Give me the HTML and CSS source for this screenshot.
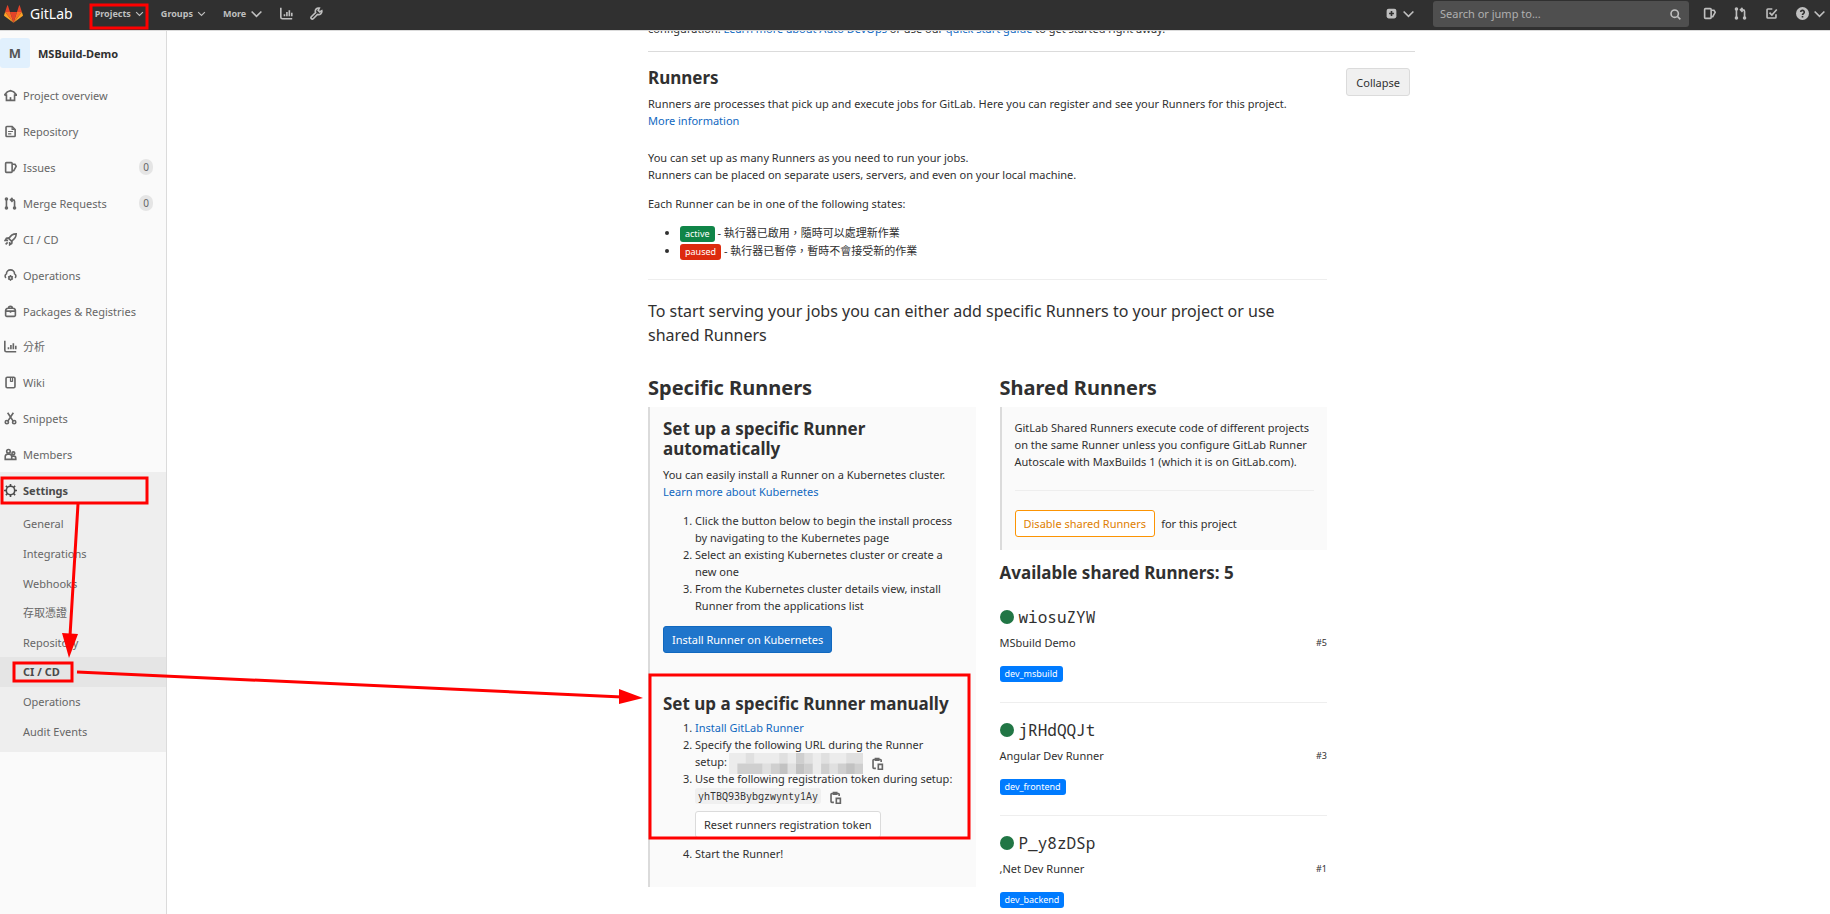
FILE: index.html
```
<!DOCTYPE html>
<html lang="en">

<head>
    <meta charset="UTF-8">
    <meta name="viewport" content="width=device-width, initial-scale=1.0">
    <title>CI / CD Settings · MSBuild-Demo · GitLab</title>
    <link rel="stylesheet" href="styles.css">
</head>

<body>

    <!-- Shared icons -->
    <svg class="icon-defs" aria-hidden="true">
        <symbol id="chevron" viewBox="0 0 16 16"><path d="M2 5.500l6 6 6-6" /></symbol>
        <symbol id="chart" viewBox="0 0 16 16"><path d="M1 1v11.500a2 2 0 0 0 2 2h12M5.500 9v2.500M8.500 6v5.500M11.500 4v7.500M14.500 7v4.500" /></symbol>
        <symbol id="wrench" viewBox="0 0 16 16"><path d="M14.500 4.500l-2.500 1.500-2-2 1.500-2.700a4 4 0 0 0-4.600 5.500L1.600 12a1.700 1.700 0 0 0 2.400 2.400l5.200-5.300a4 4 0 0 0 5.300-4.600z" /></symbol>
        <symbol id="home" viewBox="0 0 16 16"><path d="M.5 7.500L4 3.500 8 2l4 1.500 3.500 4H13M.5 7.500H3M3 6.500V14h10V6.500" /><path d="M8 10v4" /></symbol>
        <symbol id="doc" viewBox="0 0 16 16"><path d="M3.500 1.800H10l3.700 3.700v7.700a1 1 0 0 1-1 1H3.500a1 1 0 0 1-1-1V2.800a1 1 0 0 1 1-1z" /><path class="thin" d="M5 8h6M5 11h4M10 2v3.500h3" /></symbol>
        <symbol id="issues" viewBox="0 0 16 16"><path d="M3 2h6a1 1 0 0 1 1 1v10a1 1 0 0 1-1 1H3a1 1 0 0 1-1-1V3a1 1 0 0 1 1-1zM10 4h3.500L15 6.500 12 12h-2" /></symbol>
        <symbol id="merge" viewBox="0 0 16 16"><path d="M3 2v12M8.500 3.500H11a2 2 0 0 1 2 2V14M10.500 1L8 3.500 10.500 6" /><circle cx="3" cy="2.500" r="1.200" /><circle cx="3" cy="13.500" r="1.200" /><circle cx="13" cy="13.500" r="1.200" /></symbol>
        <symbol id="rocket" viewBox="0 0 16 16"><path d="M15 1c-4 0-7 2-9 6l3 3c4-2 6-5 6-9zM6 6L3 6.500 1.500 9 5 9M10 10l-.5 3-2.500 1.500V11M4.500 11.500L2 14" /></symbol>
        <symbol id="cloud" viewBox="0 0 16 16"><path d="M2.500 11A3 3 0 0 1 3 6a5 5 0 0 1 10 0 3 3 0 0 1 .5 5" /><circle cx="8" cy="11" r="2" /><path class="thin" d="M8 7.500V9M8 13v1.500M5 9.300l1.200.7M11 9.300l-1.200.7M5 12.700l1.200-.7M11 12.700l-1.200-.7" /></symbol>
        <symbol id="package" viewBox="0 0 16 16"><path d="M2 7.500h12v5a1.500 1.500 0 0 1-1.500 1.500h-9A1.500 1.500 0 0 1 2 12.500zM2 7.500C2 5.500 3 4 5 4h6c2 0 3 1.500 3 3.500M5.500 4a2.500 2.500 0 0 1 5 0M8 7v2.500" /></symbol>
        <symbol id="book" viewBox="0 0 16 16"><path d="M4 1.500h8a1.500 1.500 0 0 1 1.500 1.500v10a1.500 1.500 0 0 1-1.500 1.500H4A1.500 1.500 0 0 1 2.500 13V3A1.500 1.500 0 0 1 4 1.500z" /><path class="thin" d="M8 2v5M10.500 2v5M8 6.500h2.500" /></symbol>
        <symbol id="scissors" viewBox="0 0 16 16"><path d="M4.500 1l7 10.500M11.500 1l-7 10.500" /><circle cx="3.500" cy="12.500" r="2" /><circle cx="12.500" cy="12.500" r="2" /></symbol>
        <symbol id="members" viewBox="0 0 16 16"><circle cx="5.500" cy="4" r="2.200" /><circle cx="11.500" cy="6.500" r="1.700" /><path d="M1.500 14v-3.500a3 3 0 0 1 3-3h2a3 3 0 0 1 3 3V14zM9.500 10h2.500a2.500 2.500 0 0 1 2.500 2.500V14h-5" /></symbol>
        <symbol id="gear" viewBox="0 0 16 16"><circle cx="8" cy="8" r="5.200" /><path d="M8 0v3M8 13v3M0 8h3M13 8h3M2.300 2.300l2 2M11.700 11.700l2 2M13.700 2.300l-2 2M4.300 11.700l-2 2" /></symbol>
        <symbol id="search" viewBox="0 0 16 16"><circle cx="7" cy="7" r="4.500" /><path d="M10.500 10.500L14 14" /></symbol>
        <symbol id="todo" viewBox="0 0 16 16"><path d="M9 2.500H3.500a1 1 0 0 0-1 1v9a1 1 0 0 0 1 1h9a1 1 0 0 0 1-1V9M5.500 7l3 3 6-7" /></symbol>
        <symbol id="copy" viewBox="0 0 16 16"><path d="M6 14H3.500a1 1 0 0 1-1-1V4a1 1 0 0 1 1-1H5M10 3h1.500a1 1 0 0 1 1 1v2M5.500 2h4v2h-4zM9 9h5v6H9z" /></symbol>
    </svg>

    <!-- Top bar -->
    <header class="navbar">
        <a href="#" class="brand">
            <svg class="logo" viewBox="0 0 36 34" aria-hidden="true">
                <path fill="#e24329" d="M18 33.500l6.600-20.400H11.400z" />
                <path fill="#fc6d26" d="M18 33.500l-6.600-20.400H2.100zM18 33.500l6.600-20.400h9.300z" />
                <path fill="#fca326" d="M2.100 13.100l-2 6.200a1.400 1.400 0 0 0 .5 1.500L18 33.500zM33.900 13.100l2 6.200a1.400 1.400 0 0 1-.5 1.500L18 33.500z" />
                <path fill="#e24329" d="M2.100 13.100h9.300L7.400.8a.7.7 0 0 0-1.300 0zM33.900 13.100h-9.300l4-12.300a.7.7 0 0 1 1.300 0z" />
            </svg>
            <span>GitLab</span>
        </a>
        <nav class="main-nav">
            <button>Projects <svg class="icon small"><use href="#chevron" /></svg></button>
            <button>Groups <svg class="icon small"><use href="#chevron" /></svg></button>
            <button>More <svg class="icon"><use href="#chevron" /></svg></button>
            <a href="#" aria-label="Analytics"><svg class="icon"><use href="#chart" /></svg></a>
            <a href="#" aria-label="Admin area"><svg class="icon"><use href="#wrench" /></svg></a>
        </nav>
        <div class="nav-right">
            <button class="new-btn" aria-label="New">
                <svg class="icon" viewBox="0 0 16 16"><rect class="solid" x="2" y="2" width="12" height="12" rx="2.500" /><path class="cut" d="M8 5v6M5 8h6" /></svg>
                <svg class="icon"><use href="#chevron" /></svg>
            </button>
            <form class="search">
                <input type="text" aria-label="Search" placeholder="Search or jump to...">
                <svg class="icon"><use href="#search" /></svg>
            </form>
            <a href="#" aria-label="Issues"><svg class="icon"><use href="#issues" /></svg></a>
            <a href="#" aria-label="Merge requests"><svg class="icon"><use href="#merge" /></svg></a>
            <a href="#" aria-label="To-Do"><svg class="icon"><use href="#todo" /></svg></a>
            <button class="help-btn" aria-label="Help">
                <svg class="icon" viewBox="0 0 16 16"><circle class="solid" cx="8" cy="8" r="8" /><path class="cut" d="M5.800 6.300a2.200 2.200 0 1 1 3.300 1.900q-1.100.6-1.100 1.500M8 11v1.800" /></svg>
                <svg class="icon"><use href="#chevron" /></svg>
            </button>
        </div>
    </header>

    <div class="page">
        <!-- Sidebar -->
        <aside class="sidebar">
            <a href="#" class="project">
                <span class="avatar">M</span>
                <span>MSBuild-Demo</span>
            </a>
            <ul class="side-menu">
                <li><a href="#"><svg class="icon"><use href="#home" /></svg>Project overview</a></li>
                <li><a href="#"><svg class="icon"><use href="#doc" /></svg>Repository</a></li>
                <li><a href="#"><svg class="icon"><use href="#issues" /></svg>Issues<span class="count">0</span></a></li>
                <li><a href="#"><svg class="icon"><use href="#merge" /></svg>Merge Requests<span class="count">0</span></a></li>
                <li><a href="#"><svg class="icon"><use href="#rocket" /></svg>CI / CD</a></li>
                <li><a href="#"><svg class="icon"><use href="#cloud" /></svg>Operations</a></li>
                <li><a href="#"><svg class="icon"><use href="#package" /></svg>Packages &amp; Registries</a></li>
                <li><a href="#" class="short"><svg class="icon"><use href="#chart" /></svg>分析</a></li>
                <li><a href="#"><svg class="icon"><use href="#book" /></svg>Wiki</a></li>
                <li><a href="#"><svg class="icon"><use href="#scissors" /></svg>Snippets</a></li>
                <li><a href="#"><svg class="icon"><use href="#members" /></svg>Members</a></li>
                <li class="active">
                    <a href="#"><svg class="icon"><use href="#gear" /></svg>Settings</a>
                    <ul class="sub-menu">
                        <li><a href="#">General</a></li>
                        <li><a href="#">Integrations</a></li>
                        <li><a href="#">Webhooks</a></li>
                        <li><a href="#">存取憑證</a></li>
                        <li><a href="#">Repository</a></li>
                        <li><a href="#" class="current">CI / CD</a></li>
                        <li><a href="#">Operations</a></li>
                        <li><a href="#">Audit Events</a></li>
                    </ul>
                </li>
            </ul>
        </aside>

        <!-- Main content -->
        <main class="content">
            <div class="container">
                <p class="auto-devops">configuration. <a href="#">Learn more about Auto DevOps</a> or use our <a href="#">quick start guide</a> to get started right away.</p>

                <section class="settings">
                    <div class="settings-header">
                        <div>
                            <h4>Runners</h4>
                            <p>Runners are processes that pick up and execute jobs for GitLab. Here you can register and see your Runners for this project.<br><a href="#">More information</a></p>
                        </div>
                        <button class="btn btn-collapse">Collapse</button>
                    </div>

                    <div class="settings-content">
                        <p>You can set up as many Runners as you need to run your jobs.<br>Runners can be placed on separate users, servers, and even on your local machine.</p>
                        <p>Each Runner can be in one of the following states:</p>
                        <ul class="states">
                            <li><span class="badge badge-success">active</span> - 執行器已啟用，隨時可以處理新作業</li>
                            <li><span class="badge badge-danger">paused</span> - 執行器已暫停，暫時不會接受新的作業</li>
                        </ul>
                        <hr>
                        <p class="lead">To start serving your jobs you can either add specific Runners to your project or use shared Runners</p>

                        <div class="columns">
                            <!-- Specific runners -->
                            <div>
                                <h3>Specific Runners</h3>
                                <div class="well">
                                    <h4>Set up a specific Runner automatically</h4>
                                    <p>You can easily install a Runner on a Kubernetes cluster. <a href="#">Learn more about Kubernetes</a></p>
                                    <ol>
                                        <li>Click the button below to begin the install process by navigating to the Kubernetes page</li>
                                        <li>Select an existing Kubernetes cluster or create a new one</li>
                                        <li>From the Kubernetes cluster details view, install Runner from the applications list</li>
                                    </ol>
                                    <button class="btn btn-info">Install Runner on Kubernetes</button>

                                    <h4 class="manual">Set up a specific Runner manually</h4>
                                    <ol>
                                        <li><a href="#">Install GitLab Runner</a></li>
                                        <li>Specify the following URL during the Runner<br>setup:<svg class="masked" viewBox="0 0 16 2" preserveAspectRatio="none" aria-hidden="true">
                                                <path fill="#ececec" d="M0 0h16v2H0z" />
                                                <path fill="#e0e0e0" d="M2 0h1v1H2zM6 0h1v1H6zM9 0h1v1H9zM11 0h1v1h-1zM14 0h2v1h-2zM4 1h1v1H4zM7 1h1v1H7zM12 1h1v1h-1z" />
                                                <path fill="#cfcfcf" d="M1 1h3v1H1zM5 1h1v1H5zM8 0h1v1H8zM9 1h1v1H9zM11 1h1v1h-1zM13 1h3v1h-3z" />
                                                <path fill="#c2c2c2" d="M6 1h1v1H6zM8 1h1v1H8zM14 1h1v1h-1z" />
                                            </svg>
                                            <button class="copy-btn" aria-label="Copy URL"><svg class="icon"><use href="#copy" /></svg></button>
                                        </li>
                                        <li>Use the following registration token during setup:
                                            <code>yhTBQ93Bybgzwynty1Ay</code>
                                            <button class="copy-btn" aria-label="Copy token"><svg class="icon"><use href="#copy" /></svg></button>
                                            <div class="reset"><button class="btn">Reset runners registration token</button></div>
                                        </li>
                                        <li>Start the Runner!</li>
                                    </ol>
                                </div>
                            </div>

                            <!-- Shared runners -->
                            <div>
                                <h3>Shared Runners</h3>
                                <div class="well">
                                    <p>GitLab Shared Runners execute code of different projects on the same Runner unless you configure GitLab Runner Autoscale with MaxBuilds 1 (which it is on GitLab.com).</p>
                                    <hr>
                                    <div class="toggle"><button class="btn btn-warning">Disable shared Runners</button> for this project</div>
                                </div>
                                <h4 class="available">Available shared Runners: 5</h4>
                                <ul class="runners">
                                    <li>
                                        <div class="runner-name"><i class="dot"></i>wiosuZYW</div>
                                        <div class="runner-desc">MSbuild Demo <small>#5</small></div>
                                        <span class="badge badge-primary">dev_msbuild</span>
                                    </li>
                                    <li>
                                        <div class="runner-name"><i class="dot"></i>jRHdQQJt</div>
                                        <div class="runner-desc">Angular Dev Runner <small>#3</small></div>
                                        <span class="badge badge-primary">dev_frontend</span>
                                    </li>
                                    <li>
                                        <div class="runner-name"><i class="dot"></i>P_y8zDSp</div>
                                        <div class="runner-desc">,Net Dev Runner <small>#1</small></div>
                                        <span class="badge badge-primary">dev_backend</span>
                                    </li>
                                </ul>
                            </div>
                        </div>
                    </div>
                </section>
            </div>
        </main>
    </div>

    <!-- Red guide marks over the page -->
    <svg class="marks" width="1830" height="914" aria-hidden="true">
        <rect x="91" y="5" width="56" height="23" />
        <rect x="2" y="478" width="145" height="25" />
        <rect x="14" y="663" width="58" height="18" />
        <rect x="650" y="675" width="319" height="163" />
        <path d="M78 504L70 636M77 672L622 697" />
        <path class="head" d="M62 633l16 1-9 24zM619 689l24 9-24 6z" />
    </svg>

</body>

</html>
```
FILE: styles.css
```
* {
    box-sizing: border-box;
}

body {
    margin: 0;
    font-family: "Noto Sans", "Noto Sans CJK TC", sans-serif;
    font-size: 11px;
    line-height: 17px;
    color: #303030;
    background: #fff;
    height: 100vh;
    overflow: hidden;
}

a {
    color: #1068bf;
    text-decoration: none;
}

p {
    margin: 0 0 12px;
}

ul,
ol {
    margin: 0;
    padding: 0;
}

button,
input {
    font-family: inherit;
    font-size: inherit;
}

hr {
    border: 0;
    border-top: 1px solid #eee;
    margin: 19px 0;
}

h3,
h4 {
    margin: 0;
    font-weight: 700;
}

h3 {
    font-size: 20px;
    line-height: 24px;
}

h4 {
    font-size: 17px;
    line-height: 20px;
}

/* Icons */
.icon-defs {
    display: none;
}

.icon {
    width: 13px;
    height: 13px;
    flex: none;
    fill: none;
    stroke: currentColor;
    stroke-width: 2;
}

.icon.small {
    width: 9px;
    height: 9px;
}

.thin {
    stroke-width: 1.5;
}

.icon .solid {
    fill: currentColor;
    stroke: none;
}

.icon .cut {
    stroke: #303030;
}

/* Top bar */
.navbar {
    position: relative;
    z-index: 5;
    display: flex;
    align-items: center;
    height: 31px;
    padding: 0 4px 3px;
    background: #303030;
    border-bottom: 1px solid #dbdbdb;
    color: #bfbfbf;
}

.navbar a,
.navbar button {
    display: flex;
    align-items: center;
    color: inherit;
    background: none;
    border: 0;
    padding: 0;
}

.navbar .brand {
    gap: 7px;
    color: #fff;
    font-size: 14px;
}

.logo {
    width: 19px;
    height: 18px;
}

.main-nav {
    display: flex;
    align-items: center;
    gap: 17px;
    margin-left: 22px;
}

.main-nav button {
    gap: 4px;
    font-size: 9px;
    font-weight: 700;
}

.nav-right {
    display: flex;
    align-items: center;
    gap: 18px;
    margin-left: auto;
}

.nav-right .new-btn,
.nav-right .help-btn {
    gap: 4px;
}

.search {
    position: relative;
    width: 256px;
    margin-right: -4px;
}

.search input {
    width: 100%;
    height: 26px;
    padding: 0 7px;
    border: 0;
    border-radius: 3px;
    background: #4f4f4f;
    color: #fff;
}

.search input::placeholder {
    color: #b0b0b0;
}

.search .icon {
    position: absolute;
    right: 7px;
    top: 7px;
}

/* Sidebar */
.page {
    display: flex;
    height: calc(100vh - 31px);
}

.sidebar {
    flex: none;
    width: 167px;
    background: #fafafa;
    border-right: 1px solid #dbdbdb;
}

.project {
    display: flex;
    align-items: center;
    gap: 8px;
    height: 44px;
    margin-bottom: 2px;
    font-weight: 700;
    color: #303030;
}

.avatar {
    width: 30px;
    height: 30px;
    border-radius: 3px;
    background: #e1f0fd;
    color: #555;
    font-size: 13px;
    line-height: 30px;
    text-align: center;
}

.side-menu,
.sub-menu,
.runners {
    list-style: none;
}

.side-menu a {
    display: flex;
    align-items: center;
    gap: 6px;
    height: 36px;
    padding: 0 13px 0 4px;
    color: #666;
}

.side-menu a.short {
    height: 35px;
}

.count {
    margin-left: auto;
    padding: 0 4px;
    border-radius: 8px;
    background: #e5e5e5;
    font-size: 10px;
    line-height: 16px;
}

.side-menu .active {
    background: #eee;
    padding-bottom: 6px;
}

.side-menu .active > a,
.side-menu .current {
    font-weight: 700;
    color: #4a4a4a;
}

.sub-menu {
    display: grid;
    grid-auto-rows: 1fr;
    height: 237px;
    margin-top: 1px;
}

.sub-menu a {
    height: 100%;
    padding-left: 23px;
}

.sub-menu .current {
    background: #e5e5e5;
}

/* Main content */
.content {
    flex: 1;
    overflow: hidden;
    padding-left: 66px;
}

.container {
    max-width: 767px;
    margin: 0 auto;
}

/* The page is scrolled, this line is half under the top bar */
.auto-devops {
    margin: -11px 0 14px;
}

.settings {
    border-top: 1px solid #dbdbdb;
    padding-top: 16px;
}

.settings-header {
    display: flex;
    justify-content: space-between;
    align-items: flex-start;
    padding-right: 5px;
}

.settings-header h4 {
    margin-bottom: 7px;
}

.settings-header p {
    margin-bottom: 20px;
}

.settings-content {
    margin-right: 88px;
}

.btn {
    height: 27px;
    padding: 0 8px;
    border: 1px solid #dbdbdb;
    border-radius: 3px;
    background: #fff;
    color: #303030;
}

.btn-collapse {
    height: 28px;
    padding: 0 9px;
    background: #f0f0f0;
}

.btn-info {
    background: #1f75cb;
    border-color: #1068bf;
    color: #fff;
}

.btn-warning {
    border-color: #fc9403;
    color: #de7e00;
}

.states {
    padding-left: 32px;
}

.badge {
    display: inline-block;
    padding: 0 5px;
    border-radius: 3px;
    color: #fff;
    font-size: 9px;
    line-height: 16px;
}

.badge-success {
    background: #108548;
}

.badge-danger {
    background: #dd2b0e;
}

.badge-primary {
    background: #007bff;
}

.lead {
    margin-bottom: 29px;
    font-size: 16px;
    line-height: 24px;
}

.columns {
    display: grid;
    grid-template-columns: 1fr 1fr;
    gap: 24px;
}

.well {
    margin-top: 7px;
    padding: 12px 13px 13px;
    background: #fafafa;
    border-left: 2px solid #dbdbdb;
}

.well h4 {
    margin-bottom: 7px;
}

.well hr {
    margin-top: 20px;
}

.well ol {
    padding-left: 32px;
    margin-bottom: 12px;
}

.well .manual {
    margin: 41px 0 5px;
}

.masked {
    width: 134px;
    height: 21px;
    margin: -4px 0 -4px 2px;
    vertical-align: middle;
}

.copy-btn {
    height: 13px;
    margin: 0 0 0 5px;
    padding: 0;
    border: 0;
    background: none;
    color: #666;
    vertical-align: middle;
}

.copy-btn .icon {
    display: block;
}

code {
    padding: 1px 3px;
    border-radius: 3px;
    background: #f0f0f0;
    font-family: "Noto Sans Mono", "DejaVu Sans Mono", monospace;
    font-size: 10px;
}

.reset {
    display: flex;
    margin: 6px 0 7px;
}

.toggle {
    display: flex;
    align-items: center;
    gap: 6px;
}

.available {
    margin: 13px 0 7px;
}

.runners li {
    padding: 17px 0 20px;
    border-bottom: 1px solid #eee;
}

.runner-name {
    display: flex;
    align-items: center;
    gap: 5px;
    font-family: "Noto Sans Mono", "DejaVu Sans Mono", monospace;
    font-size: 16px;
    line-height: 20px;
}

.dot {
    width: 14px;
    height: 14px;
    border-radius: 50%;
    background: #217645;
}

.runner-desc {
    display: flex;
    justify-content: space-between;
    margin: 7px 0 13px;
}

.runner-desc small {
    font-size: 9px;
}

/* Guide marks */
.marks {
    position: absolute;
    top: 0;
    left: 0;
    z-index: 10;
    pointer-events: none;
    fill: none;
    stroke: #f00;
    stroke-width: 3;
}

.marks .head {
    fill: #f00;
    stroke: none;
}
```
